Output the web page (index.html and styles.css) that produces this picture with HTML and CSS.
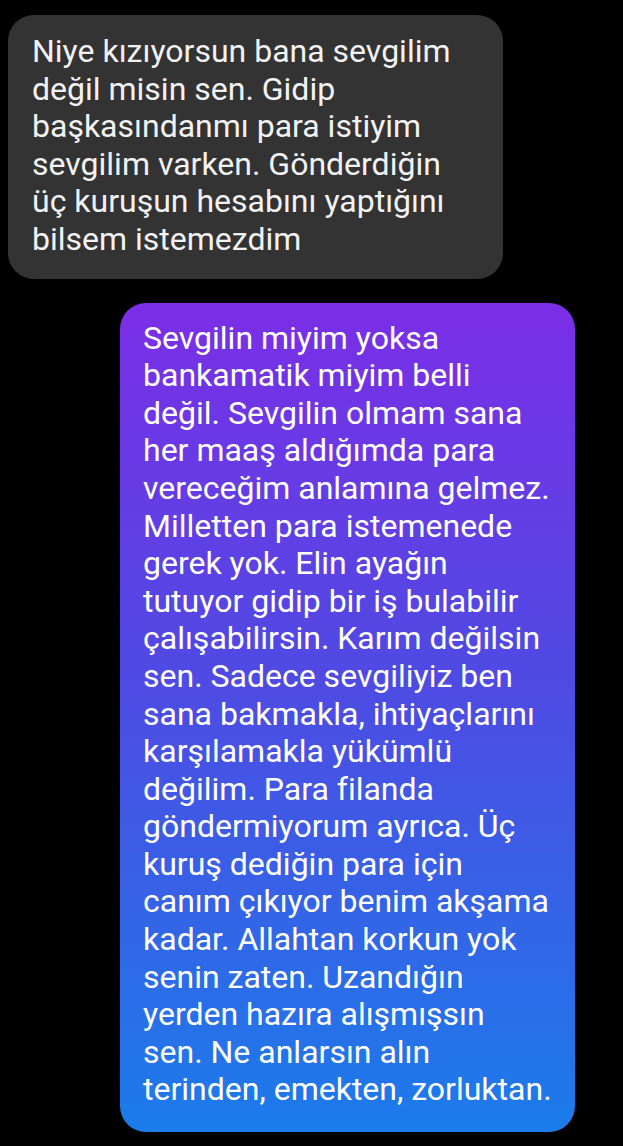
FILE: index.html
```html
<!DOCTYPE html>
<html lang="tr">
<head>
    <meta charset="UTF-8">
    <meta name="viewport" content="width=device-width, initial-scale=1.0">
    <link rel="stylesheet" href="styles.css">
    <title>Sohbet</title>
</head>
<body>
    <div class="sohbet">
        <div class="mesaj gelen">
            <p>
                Niye kızıyorsun bana sevgilim<br>
                değil misin sen. Gidip<br>
                başkasındanmı para istiyim<br>
                sevgilim varken. Gönderdiğin<br>
                üç kuruşun hesabını yaptığını<br>
                bilsem istemezdim
            </p>
        </div>
        <div class="mesaj giden">
            <p>
                Sevgilin miyim yoksa<br>
                bankamatik miyim belli<br>
                değil. Sevgilin olmam sana<br>
                her maaş aldığımda para<br>
                vereceğim anlamına gelmez.<br>
                Milletten para istemenede<br>
                gerek yok. Elin ayağın<br>
                tutuyor gidip bir iş bulabilir<br>
                çalışabilirsin. Karım değilsin<br>
                sen. Sadece sevgiliyiz ben<br>
                sana bakmakla, ihtiyaçlarını<br>
                karşılamakla yükümlü<br>
                değilim. Para filanda<br>
                göndermiyorum ayrıca. Üç<br>
                kuruş dediğin para için<br>
                canım çıkıyor benim akşama<br>
                kadar. Allahtan korkun yok<br>
                senin zaten. Uzandığın<br>
                yerden hazıra alışmışsın<br>
                sen. Ne anlarsın alın<br>
                terinden, emekten, zorluktan.
            </p>
        </div>
    </div>
</body>
</html>
```

FILE: styles.css
```css
html, body{
    margin: 0;
    background: #000;
}
.sohbet{
    display: flex;
    flex-direction: column;
    gap: 24px;
    padding: 15px 0 0 8px;
    font-family: Roboto, "Noto Sans", sans-serif;
}
.mesaj{
    border-radius: 26px;
    box-sizing: border-box;
}
.mesaj p{
    margin: 0;
    font-size: 32px;
    line-height: 37.6px;
    white-space: nowrap;
}
.gelen{
    align-self: flex-start;
    width: 495px;
    padding: 18px 20px 20px 24px;
    background: #333333;
    color: #f2f2f2;
}
.giden{
    margin-left: 112px;
    width: 455px;
    padding: 17px 20px 23px 23px;
    background: linear-gradient(180deg, #7b2ee6 0%, #4f4ae3 45%, #1b7cea 100%);
    color: #ffffff;
}
```
